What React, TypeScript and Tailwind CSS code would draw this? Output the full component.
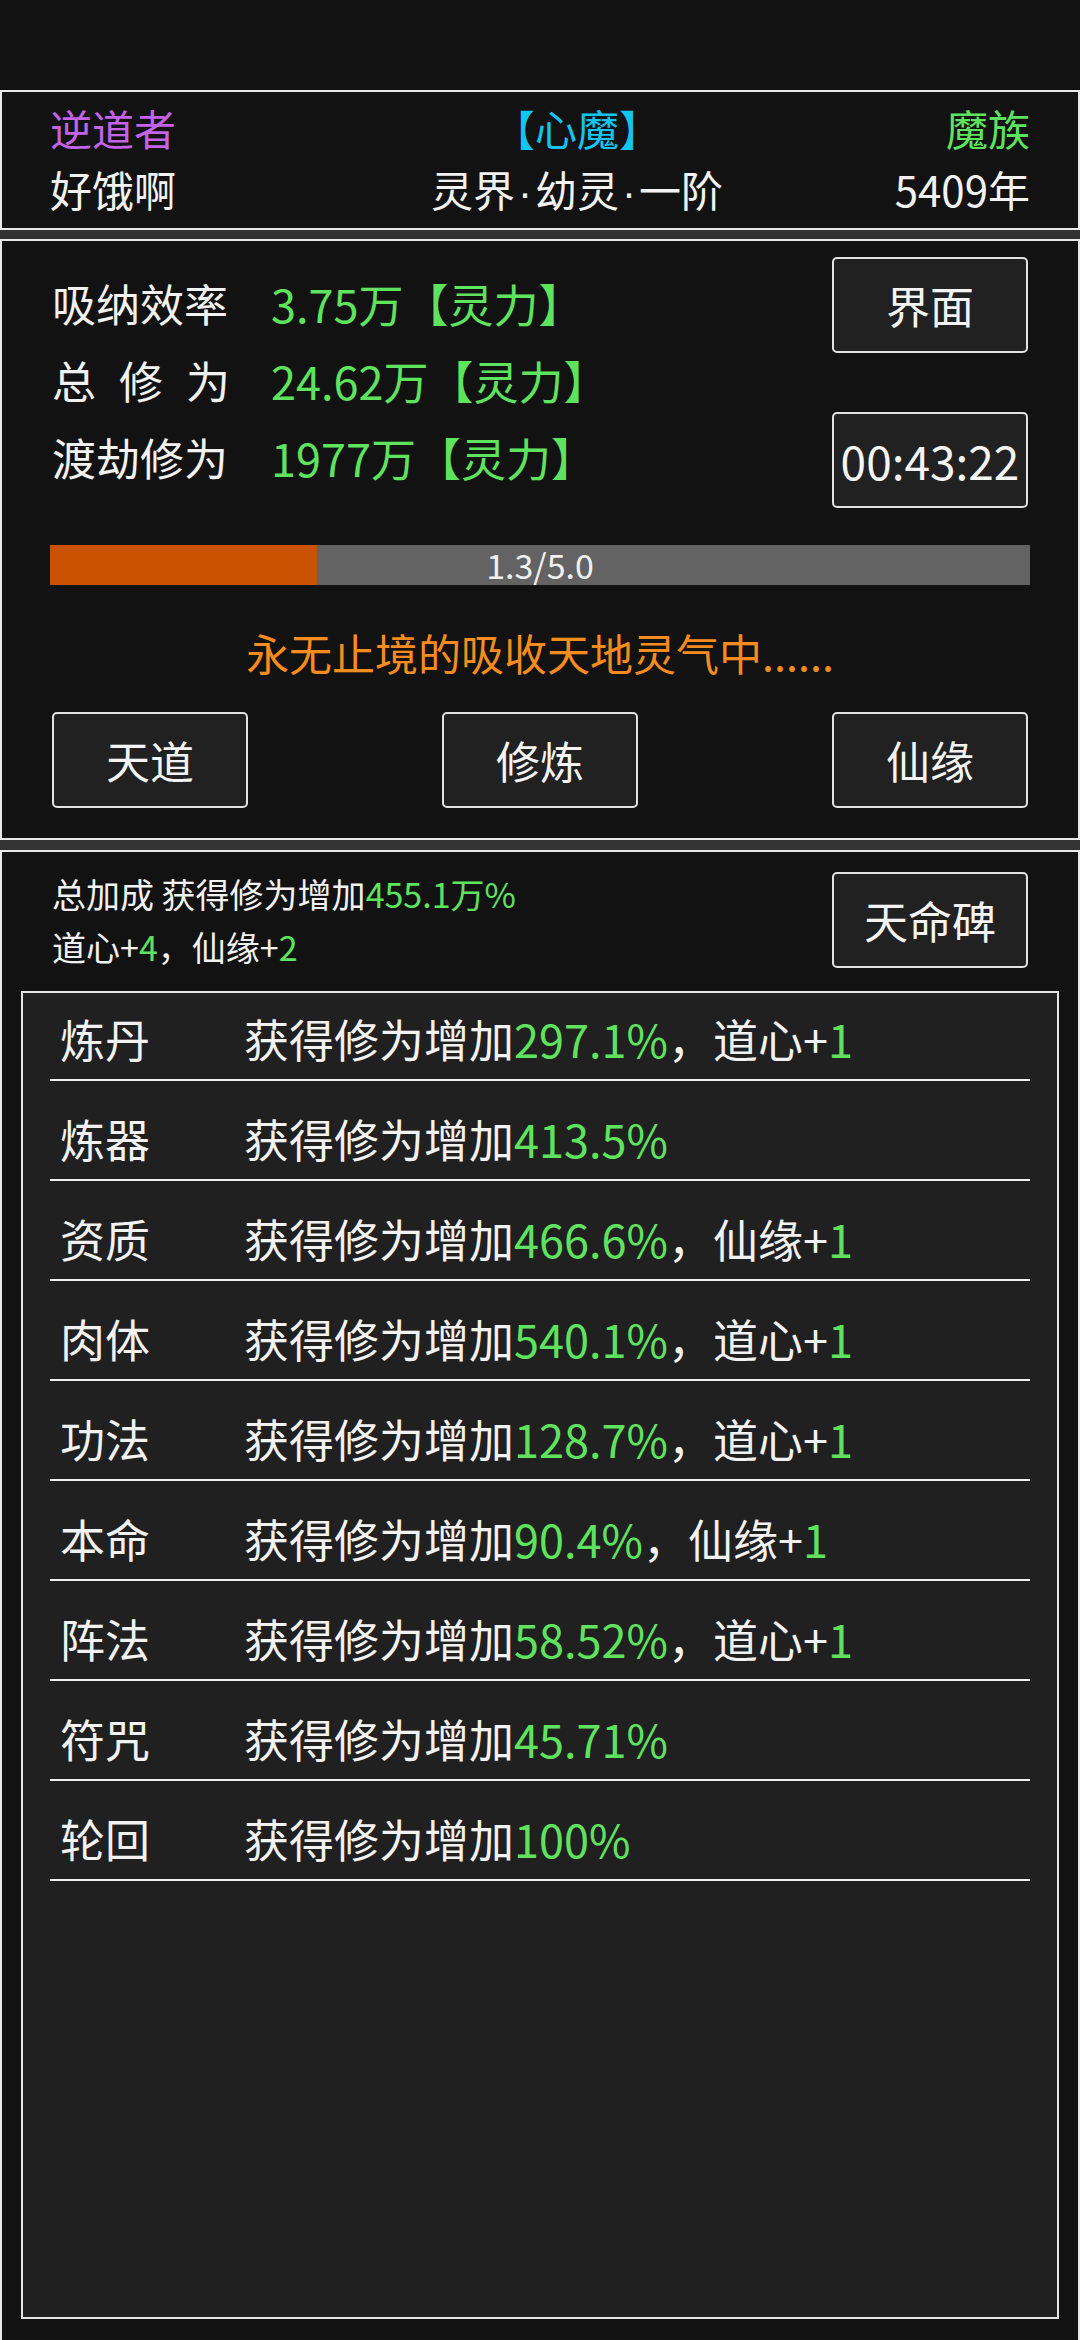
import React from "react"

const GREEN = "text-[#5fe35f]"

interface Bonus {
  name: string
  value: string
  extra?: { label: string; amount: string }
}

const BONUSES: Bonus[] = [
  { name: "炼丹", value: "297.1%", extra: { label: "道心+", amount: "1" } },
  { name: "炼器", value: "413.5%" },
  { name: "资质", value: "466.6%", extra: { label: "仙缘+", amount: "1" } },
  { name: "肉体", value: "540.1%", extra: { label: "道心+", amount: "1" } },
  { name: "功法", value: "128.7%", extra: { label: "道心+", amount: "1" } },
  { name: "本命", value: "90.4%", extra: { label: "仙缘+", amount: "1" } },
  { name: "阵法", value: "58.52%", extra: { label: "道心+", amount: "1" } },
  { name: "符咒", value: "45.71%" },
  { name: "轮回", value: "100%" },
]

function BoxButton({ children, small }: { children: React.ReactNode; small?: boolean }) {
  return (
    <button
      className={`w-[196px] h-[96px] shrink-0 flex items-center justify-center rounded-[5px] border-2 border-[#e2e2e2] bg-[#212121] text-[#f4f4f4] leading-none ${small ? "text-[46px]" : "text-[44px]"}`}
    >
      {children}
    </button>
  )
}

function StatRow({ label, value, spread }: { label: string; value: string; spread?: boolean }) {
  return (
    <div className="flex h-[77px] items-center leading-[77px] whitespace-nowrap">
      {spread ? (
        <div className="flex w-[178px] shrink-0 justify-between text-[44px]">
          {label.split("").map((c, i) => <span key={i}>{c}</span>)}
        </div>
      ) : (
        <div className="w-[178px] shrink-0 text-[44px]">{label}</div>
      )}
      <div className={`ml-[41px] ${GREEN}`}>{value}</div>
    </div>
  )
}

function Dot() {
  return <span className="px-[3px] font-['Liberation_Sans',sans-serif]">·</span>
}

export default function App() {
  return (
    <div className="w-[1080px] h-[2340px] overflow-hidden bg-[#333333] flex flex-col font-['Noto_Sans_CJK_SC',sans-serif] text-[#f2f2f2]">
      <div className="h-[90px] shrink-0 bg-[#121212]" />

      {/* header */}
      <div className="h-[140px] shrink-0 border-2 border-[#e8e8e8] bg-[#121212] px-[48px] pt-[5px]">
        <div className="grid grid-cols-[327px_400px_1fr] text-[42px] leading-[61px]">
          <div className="text-[#c462e8]">逆道者</div>
          <div className="text-center text-[#12c4ee]">【心魔】</div>
          <div className="text-right text-[#5fe35f]">魔族</div>
          <div>好饿啊</div>
          <div className="text-center">
            灵界<Dot />幼灵<Dot />一阶
          </div>
          <div className="text-right">5409年</div>
        </div>
      </div>

      {/* cultivation */}
      <div className="mt-[9px] h-[601px] shrink-0 border-2 border-[#e8e8e8] bg-[#121212] px-[50px] text-[45px]">
        <div className="flex justify-between pt-[16px]">
          <div className="flex flex-col pt-[8px]">
            <StatRow label="吸纳效率" value="3.75万【灵力】" />
            <StatRow label="总修为" value="24.62万【灵力】" spread />
            <StatRow label="渡劫修为" value="1977万【灵力】" />
          </div>
          <div className="flex flex-col gap-[59px]">
            <BoxButton>界面</BoxButton>
            <BoxButton small>00:43:22</BoxButton>
          </div>
        </div>

        <div className="relative -mx-[2px] mt-[37px] h-[40px] bg-[#636363]">
          <div className="h-full bg-[#c85200]" style={{ width: "27.2%" }} />
          <div className="absolute inset-0 flex items-center justify-center text-[34px] leading-none text-[#f0f0f0]">
            1.3/5.0
          </div>
        </div>

        <div className="mt-[37px] text-center text-[43px] leading-[60px] text-[#f68b1f]">永无止境的吸收天地灵气中......</div>

        <div className="mt-[30px] flex justify-between">
          <BoxButton>天道</BoxButton>
          <BoxButton>修炼</BoxButton>
          <BoxButton>仙缘</BoxButton>
        </div>
      </div>

      {/* bonuses */}
      <div className="mt-[10px] flex-1 border-x-2 border-t-2 border-[#e8e8e8] bg-[#121212] px-[19px] pt-[15px]">
        <div className="flex items-center justify-between px-[31px]">
          <div className="text-[34px] leading-[53px]">
            <div>
              总加成 获得修为增加<span className={GREEN}>455.1万%</span>
            </div>
            <div>
              道心+<span className={GREEN}>4</span>，仙缘+<span className={GREEN}>2</span>
            </div>
          </div>
          <BoxButton>天命碑</BoxButton>
        </div>

        <div className="mt-[18px] h-[1328px] border-2 border-[#e6e6e6] bg-[#202020] px-[27px] text-[45px]">
          {BONUSES.map((b, i) => (
            <div
              key={b.name}
              className={`flex items-end border-b-2 border-[#efefef] pb-[10px] leading-[60px] ${i === 0 ? "h-[88px]" : "h-[100px]"}`}
            >
              <div className="w-[194px] shrink-0 pl-[10px]">{b.name}</div>
              <div className="whitespace-nowrap">
                获得修为增加<span className={GREEN}>{b.value}</span>
                {b.extra && (
                  <>
                    ，{b.extra.label}
                    <span className={GREEN}>{b.extra.amount}</span>
                  </>
                )}
              </div>
            </div>
          ))}
        </div>
      </div>
    </div>
  )
}
